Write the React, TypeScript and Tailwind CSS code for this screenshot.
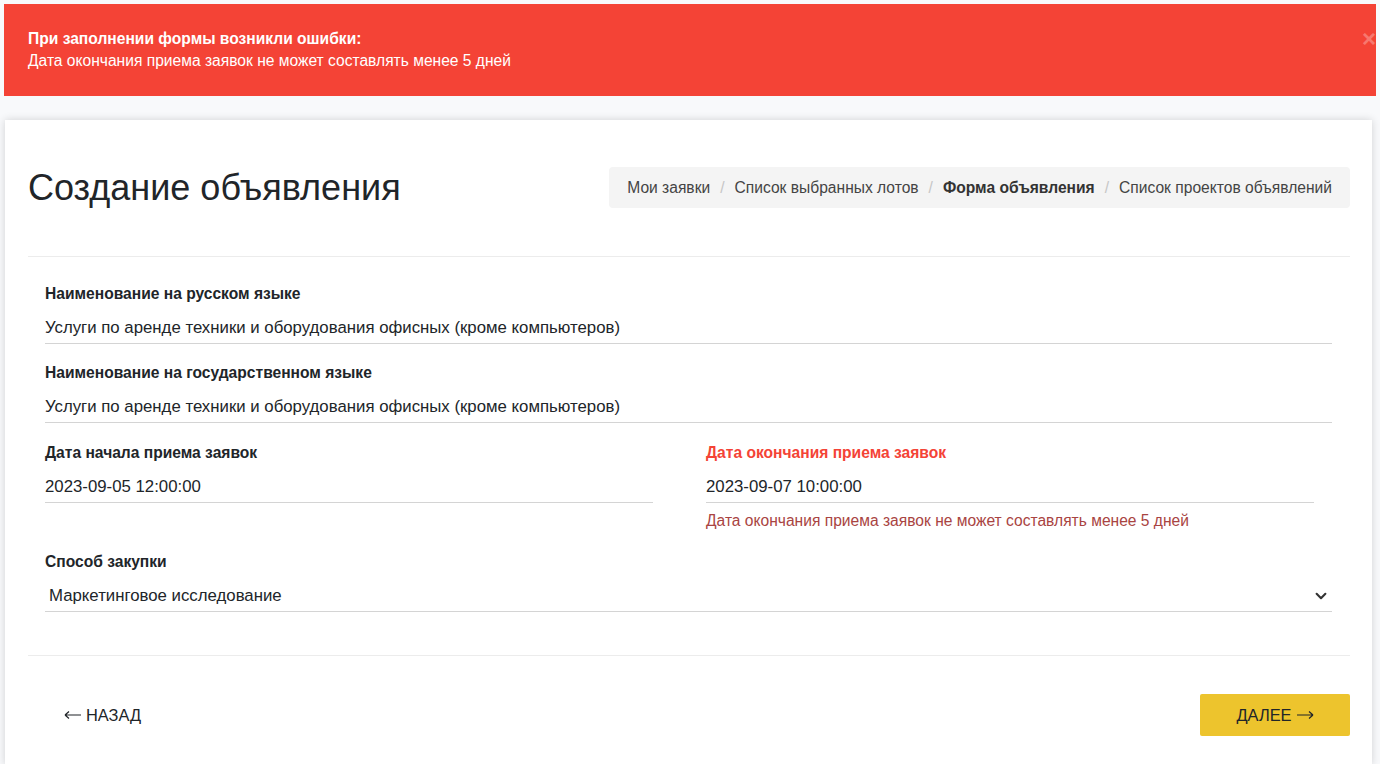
import React from "react";

function Field({
  label,
  value,
  error,
  labelRed,
}: {
  label: string;
  value: string;
  error?: string;
  labelRed?: boolean;
}) {
  return (
    <div className="flex flex-col">
      <label
        className={`mb-[6px] text-[15.6px] font-bold leading-[22px] ${labelRed ? "text-[#f44336]" : "text-[#212529]"}`}
      >
        {label}
      </label>
      <div className="flex h-[33px] items-center border-b border-[#d4d4d4] pt-[2px] text-[16.8px] text-[#212529]">
        {value}
      </div>
      {error && (
        <div className="mt-[8px] text-[15.6px] leading-[20px] text-[#a94442]">{error}</div>
      )}
    </div>
  );
}

function Arrow({ dir }: { dir: "left" | "right" }) {
  return (
    <svg width="17" height="10" viewBox="0 0 17 10" fill="none" stroke="#212529" strokeWidth="1.2" className="shrink-0">
      {dir === "left" ? <path d="M1 5h16M1 5l4-3.5M1 5l4 3.5" /> : <path d="M0 5h16M16 5l-4-3.5M16 5l-4 3.5" />}
    </svg>
  );
}

export default function App() {
  const crumbs = [
    { t: "Мои заявки" },
    { t: "Список выбранных лотов" },
    { t: "Форма объявления", active: true },
    { t: "Список проектов объявлений" },
  ];

  return (
    <div
      className="min-h-[764px] bg-[#f8f9fb] px-[4px] pt-[4px]"
      style={{ fontFamily: '"Liberation Sans", Arial, sans-serif' }}
    >
      {/* error banner */}
      <div className="relative bg-[#f44336] px-[24px] pb-[24px] pt-[24px] text-white">
        <div className="text-[15.6px] font-bold leading-[22px]">При заполнении формы возникли ошибки:</div>
        <div className="text-[15.6px] leading-[22px]">Дата окончания приема заявок не может составлять менее 5 дней</div>
        <span className="absolute right-0 top-[23px] text-[24px] font-bold leading-none text-white/30">×</span>
      </div>

      {/* card */}
      <div className="ml-[1px] mr-[4px] mt-[24px] bg-white pl-[23px] pr-[22px] shadow-[0_0_8px_rgba(0,0,0,0.16)]">
        <div className="flex items-center justify-between border-b border-[#ececec] pb-[48px] pt-[47px]">
          <h1 className="text-[36px] font-normal leading-[41px] text-[#212529]">Создание объявления</h1>
          <nav className="flex h-[41px] items-center rounded-[4px] bg-[#f4f4f4] px-[18px] text-[15.6px] text-[#444]">
            {crumbs.map((c, i) => (
              <React.Fragment key={c.t}>
                {i > 0 && <span className="mx-[10px] text-[#c6c6c6]">/</span>}
                <span className={c.active ? "font-bold text-[#333]" : ""}>{c.t}</span>
              </React.Fragment>
            ))}
          </nav>
        </div>

        <div className="flex flex-col gap-[18px] pb-[43px] pl-[17px] pr-[18px] pt-[26px]">
          <Field label="Наименование на русском языке" value="Услуги по аренде техники и оборудования офисных (кроме компьютеров)" />
          <Field label="Наименование на государственном языке" value="Услуги по аренде техники и оборудования офисных (кроме компьютеров)" />
          <div className="grid grid-cols-[608px_608px] gap-x-[53px] pt-[1px]">
            <Field label="Дата начала приема заявок" value="2023-09-05 12:00:00" />
            <Field
              label="Дата окончания приема заявок"
              value="2023-09-07 10:00:00"
              labelRed
              error="Дата окончания приема заявок не может составлять менее 5 дней"
            />
          </div>
          <div className="flex flex-col pt-[2px]">
            <label className="mb-[6px] text-[15.6px] font-bold leading-[22px] text-[#212529]">Способ закупки</label>
            <div className="flex h-[33px] items-center justify-between border-b border-[#d4d4d4] pl-[4px] pr-[4px] pt-[2px] text-[16.8px] text-[#212529]">
              <span>Маркетинговое исследование</span>
              <svg width="14" height="14" viewBox="0 0 16 16" fill="none" stroke="#333" strokeWidth="2.4" strokeLinecap="round" strokeLinejoin="round">
                <path d="M3 5.5l5 5 5-5" />
              </svg>
            </div>
          </div>
        </div>

        <div className="flex items-center justify-between border-t border-[#ececec] pb-[29px] pt-[38px]">
          <button className="ml-[36px] flex items-center gap-[5px] text-[16.4px] text-[#212529]">
            <Arrow dir="left" />
            НАЗАД
          </button>
          <button className="flex h-[42px] w-[150px] items-center justify-center gap-[5px] rounded-[2px] bg-[#edc42d] text-[16.4px] text-[#212529]">
            ДАЛЕЕ
            <Arrow dir="right" />
          </button>
        </div>
      </div>
    </div>
  );
}
